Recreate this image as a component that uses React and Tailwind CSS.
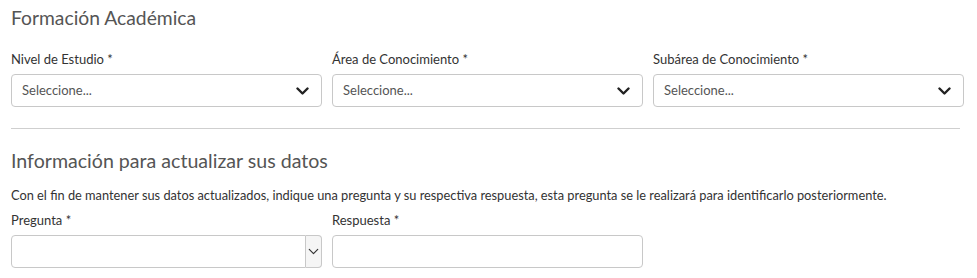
// Formación académica + datos de seguridad (form section)
const FONT = { fontFamily: "Lato, 'Open Sans', sans-serif" };

function Chevron({ thin = false }) {
	return (
		<svg
			width={thin ? 11 : 13}
			height={thin ? 7 : 8}
			viewBox="0 0 13 8"
			fill="none"
			stroke={thin ? "#333" : "#222"}
			strokeWidth={thin ? 1.4 : 2.4}
			strokeLinecap="round"
			strokeLinejoin="round"
		>
			<polyline points="1.5,1.5 6.5,6.5 11.5,1.5" />
		</svg>
	);
}

function Field({ label, children }) {
	return (
		<div className="flex flex-col">
			<label className="text-[13px] leading-[18px] text-[#333]">{label}</label>
			<div className="mt-[6px]">{children}</div>
		</div>
	);
}

function SelectBox({ placeholder = "Seleccione..." }) {
	return (
		<div className="flex h-[33px] w-full items-center justify-between rounded-[4px] border border-[#c8c8c8] bg-white pl-[10px] pr-[12px]">
			<span className="text-[13px] text-[#555]">{placeholder}</span>
			<Chevron />
		</div>
	);
}

function NativeSelect() {
	return (
		<div className="flex h-[33px] w-full">
			<div className="flex-1 rounded-l-[4px] border border-[#c8c8c8] bg-white" />
			<div className="flex w-[16px] items-center justify-center rounded-r-[4px] border border-l-0 border-[#c8c8c8] bg-[#f5f5f5]">
				<Chevron thin />
			</div>
		</div>
	);
}

export default function App() {
	return (
		<div className="h-[278px] w-[977px] bg-white" style={FONT}>
			<div className="w-[960px] pl-[11px] pt-[6px]">
				<h2 className="text-[19.3px] leading-[24px] text-[#555]">Formación Académica</h2>

				<div className="mt-[20px] grid grid-cols-[311px_311px_311px] gap-x-[10px]">
					<Field label="Nivel de Estudio *">
						<SelectBox />
					</Field>
					<Field label="Área de Conocimiento *">
						<SelectBox />
					</Field>
					<Field label="Subárea de Conocimiento *">
						<SelectBox />
					</Field>
				</div>

				<hr className="mt-[21px] border-t border-[#cfcfcf]" />

				<h2 className="mt-[20px] text-[19.6px] leading-[24px] text-[#555]">
					Información para actualizar sus datos
				</h2>
				<p className="mt-[14px] text-[12.8px] leading-[16px] text-[#333]">
					Con el fin de mantener sus datos actualizados, indique una pregunta y su respectiva respuesta, esta pregunta se le realizará para identificarlo posteriormente.
				</p>

				<div className="mt-[8px] grid grid-cols-[311px_311px] gap-x-[10px]">
					<Field label="Pregunta *">
						<NativeSelect />
					</Field>
					<Field label="Respuesta *">
						<input
							type="text"
							className="h-[33px] w-full rounded-[4px] border border-[#c8c8c8] bg-white px-[10px] text-[13px] outline-none"
						/>
					</Field>
				</div>
			</div>
		</div>
	);
}
